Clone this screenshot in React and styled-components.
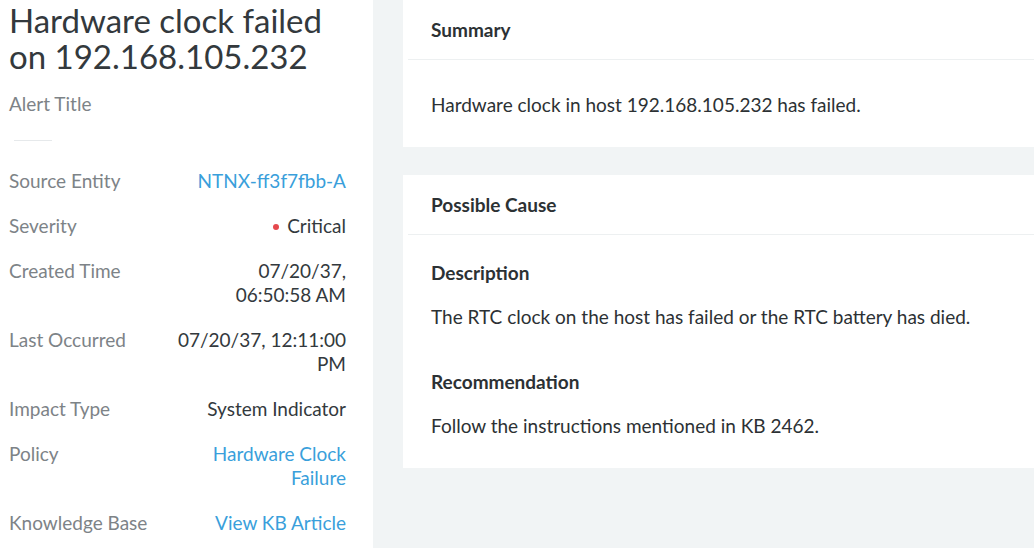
import React from 'react'
import styled, { createGlobalStyle } from 'styled-components';

const GlobalStyle = createGlobalStyle`
    html, body {
        margin: 0;
        padding: 0;
        background: #f1f4f5;
        font-family: Lato, "Liberation Sans", sans-serif;
    }
`;

const details = [
    { label: 'Source Entity', value: 'NTNX-ff3f7fbb-A', link: true },
    { label: 'Severity', value: 'Critical', dot: true },
    { label: 'Created Time', value: '07/20/37, 06:50:58 AM', narrow: true },
    { label: 'Last Occurred', value: '07/20/37, 12:11:00 PM' },
    { label: 'Impact Type', value: 'System Indicator' },
    { label: 'Policy', value: 'Hardware Clock Failure', link: true, narrow: true },
    { label: 'Knowledge Base', value: 'View KB Article', link: true },
];

const App = () => {
    return (
        <Layout>
            <GlobalStyle />
            <Sidebar>
                <Title>Hardware clock failed on 192.168.105.232</Title>
                <Caption>Alert Title</Caption>
                <ShortRule />
                <DetailList>
                    {details.map((d) => (
                        <DetailRow key={d.label}>
                            <Label>{d.label}</Label>
                            <Value $link={d.link} $narrow={d.narrow}>
                                {d.dot && <Dot />}
                                {d.value}
                            </Value>
                        </DetailRow>
                    ))}
                </DetailList>
            </Sidebar>
            <Main>
                <Card>
                    <CardHeader>Summary</CardHeader>
                    <CardBody $pad="33px 28px 30px">
                        <Text>Hardware clock in host 192.168.105.232 has failed.</Text>
                    </CardBody>
                </Card>
                <Card>
                    <CardHeader>Possible Cause</CardHeader>
                    <CardBody $pad="26px 28px 30px">
                        <SubHeading>Description</SubHeading>
                        <Text>The RTC clock on the host has failed or the RTC battery has died.</Text>
                        <SubHeading $spaced>Recommendation</SubHeading>
                        <Text>Follow the instructions mentioned in KB 2462.</Text>
                    </CardBody>
                </Card>
            </Main>
        </Layout>
    )
}

const Layout = styled.div`
    display: flex;
    width: 1034px;
    height: 548px;
    overflow: hidden;
`;
const Sidebar = styled.div`
    width: 373px;
    flex-shrink: 0;
    background: #ffffff;
    padding: 2px 27px 0 9px;
    box-sizing: border-box;
`;
const Title = styled.h1`
    margin: 0;
    font-size: 33px;
    line-height: 36px;
    font-weight: 400;
    color: #33393d;
`;
const Caption = styled.div`
    margin-top: 18px;
    font-size: 19px;
    line-height: 24px;
    color: #7d8387;
`;
const ShortRule = styled.div`
    width: 38px;
    height: 1px;
    margin: 24px 0 28px 5px;
    background: #e6e9eb;
`;
const DetailList = styled.div`
    display: flex;
    flex-direction: column;
    gap: 21px;
`;
const DetailRow = styled.div`
    display: flex;
    justify-content: space-between;
    align-items: flex-start;
    font-size: 19px;
    line-height: 24px;
`;
const Label = styled.div`
    color: #7d8387;
    white-space: nowrap;
`;
const Value = styled.div`
    text-align: right;
    max-width: ${(p) => (p.$narrow ? '145px' : '175px')};
    color: ${(p) => (p.$link ? '#3a9fdb' : '#33393d')};
`;
const Dot = styled.span`
    display: inline-block;
    width: 6px;
    height: 6px;
    border-radius: 50%;
    background: #e5484d;
    margin-right: 8px;
    vertical-align: middle;
    position: relative;
    top: -1px;
`;
const Main = styled.div`
    flex: 1;
    padding-left: 30px;
    display: flex;
    flex-direction: column;
    gap: 28px;
    overflow: hidden;
`;
const Card = styled.div`
    background: #ffffff;
    margin-right: -20px;
`;
const CardHeader = styled.div`
    padding: 18px 28px 17px 23px;
    margin-left: 5px;
    font-size: 19px;
    line-height: 24px;
    font-weight: 700;
    color: #2c3134;
    border-bottom: 1px solid #edf0f1;
`;
const CardBody = styled.div`
    padding: ${(p) => p.$pad};
`;
const SubHeading = styled.div`
    font-size: 19px;
    line-height: 24px;
    font-weight: 700;
    color: #2c3134;
    margin-top: ${(p) => (p.$spaced ? '41px' : '0')};
    margin-bottom: 20px;
`;
const Text = styled.div`
    font-size: 19px;
    line-height: 24px;
    color: #2c3134;
`;

export default App
